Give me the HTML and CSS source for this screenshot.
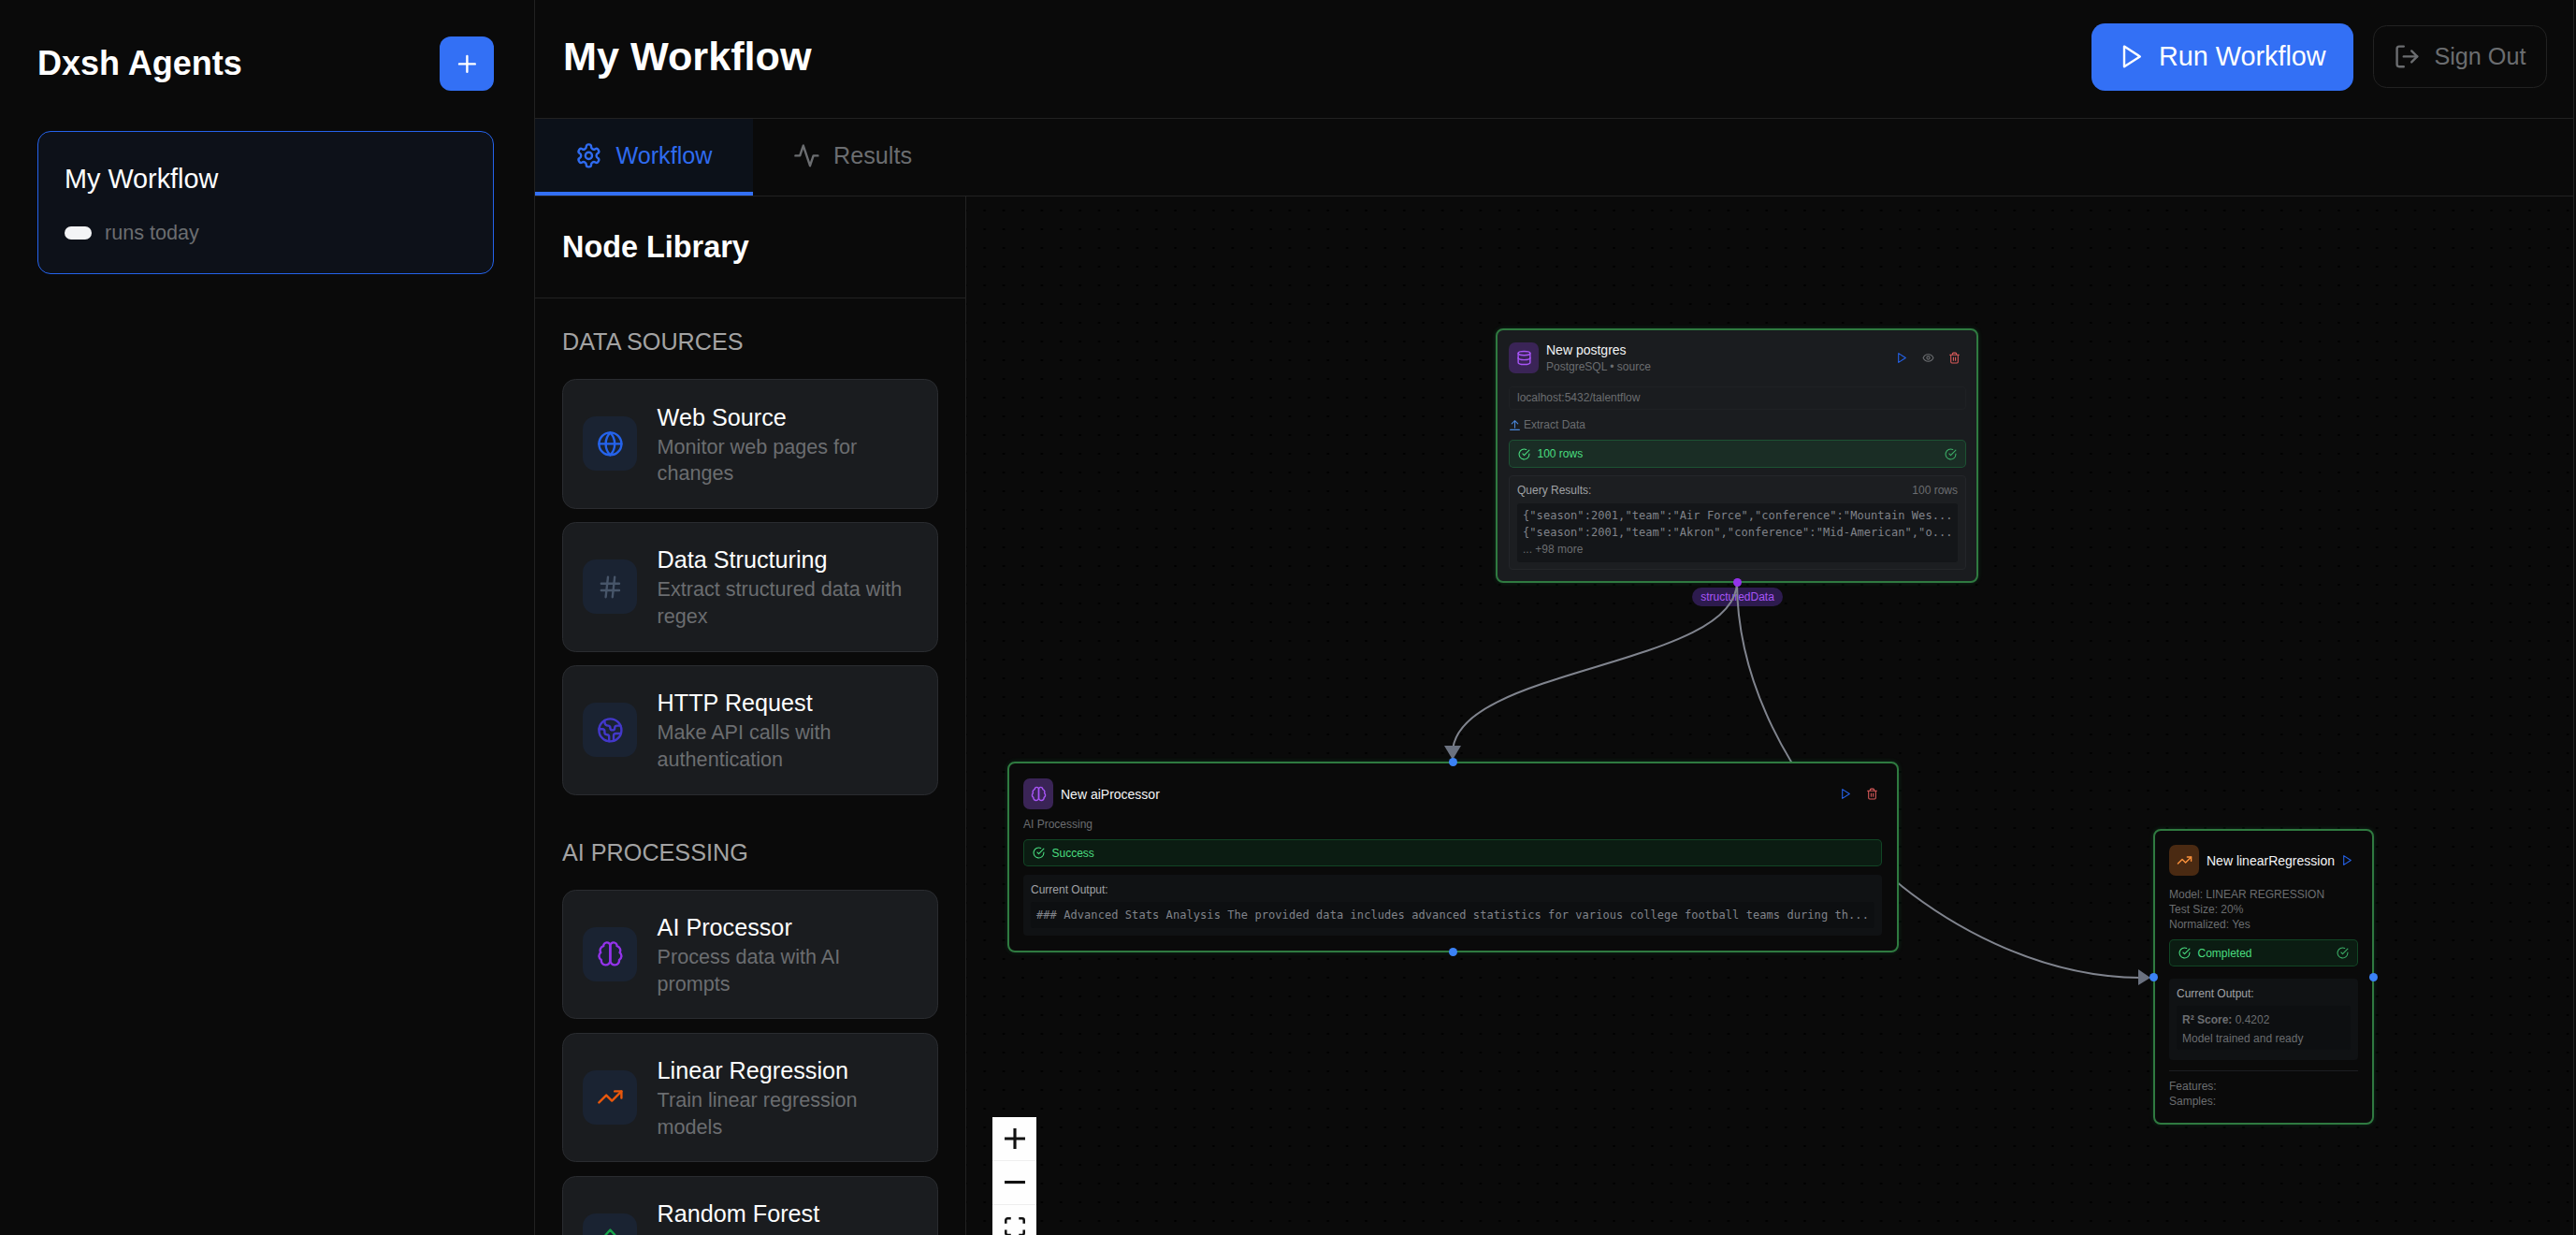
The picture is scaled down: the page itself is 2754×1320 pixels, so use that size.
FILE: index.html
```html
<!DOCTYPE html>
<html lang="en">

<head>
    <meta charset="UTF-8">
    <meta name="viewport" content="width=device-width, initial-scale=1.0">
    <title>My Workflow - Dxsh Agents</title>
    <link rel="stylesheet" href="styles.css">
</head>

<body>
    <!-- Icon set -->
    <svg class="icon-defs" aria-hidden="true">
        <symbol id="i-plus" viewBox="0 0 24 24"><path d="M5 12h14M12 5v14" /></symbol>
        <symbol id="i-play" viewBox="0 0 24 24"><polygon points="5 3 19 12 5 21" /></symbol>
        <symbol id="i-logout" viewBox="0 0 24 24"><path d="M9 21H5a2 2 0 0 1-2-2V5a2 2 0 0 1 2-2h4" /><polyline points="16 17 21 12 16 7" /><line x1="21" y1="12" x2="9" y2="12" /></symbol>
        <symbol id="i-gear" viewBox="0 0 24 24"><path d="M12.22 2h-.44a2 2 0 0 0-2 2v.18a2 2 0 0 1-1 1.73l-.43.25a2 2 0 0 1-2 0l-.15-.08a2 2 0 0 0-2.73.73l-.22.38a2 2 0 0 0 .73 2.73l.15.1a2 2 0 0 1 1 1.72v.51a2 2 0 0 1-1 1.74l-.15.09a2 2 0 0 0-.73 2.73l.22.38a2 2 0 0 0 2.73.73l.15-.08a2 2 0 0 1 2 0l.43.25a2 2 0 0 1 1 1.73V20a2 2 0 0 0 2 2h.44a2 2 0 0 0 2-2v-.18a2 2 0 0 1 1-1.73l.43-.25a2 2 0 0 1 2 0l.15.08a2 2 0 0 0 2.73-.73l.22-.39a2 2 0 0 0-.73-2.73l-.15-.08a2 2 0 0 1-1-1.74v-.5a2 2 0 0 1 1-1.74l.15-.09a2 2 0 0 0 .73-2.73l-.22-.38a2 2 0 0 0-2.73-.73l-.15.08a2 2 0 0 1-2 0l-.43-.25a2 2 0 0 1-1-1.73V4a2 2 0 0 0-2-2z" /><circle cx="12" cy="12" r="3" /></symbol>
        <symbol id="i-activity" viewBox="0 0 24 24"><path d="M22 12h-4l-3 9L9 3l-3 9H2" /></symbol>
        <symbol id="i-globe" viewBox="0 0 24 24"><circle cx="12" cy="12" r="10" /><path d="M12 2a14.5 14.5 0 0 0 0 20 14.5 14.5 0 0 0 0-20M2 12h20" /></symbol>
        <symbol id="i-hash" viewBox="0 0 24 24"><path d="M4 9h16M4 15h16M10 3 8 21M16 3l-2 18" /></symbol>
        <symbol id="i-earth" viewBox="0 0 24 24"><path d="M21.54 15H17a2 2 0 0 0-2 2v4.54" /><path d="M7 3.34V5a3 3 0 0 0 3 3a2 2 0 0 1 2 2c0 1.1.9 2 2 2a2 2 0 0 0 2-2c0-1.1.9-2 2-2h3.17" /><path d="M11 21.95V18a2 2 0 0 0-2-2a2 2 0 0 1-2-2v-1a2 2 0 0 0-2-2H2.05" /><circle cx="12" cy="12" r="10" /></symbol>
        <symbol id="i-brain" viewBox="0 0 24 24"><path d="M12 5a3 3 0 1 0-5.997.125 4 4 0 0 0-2.526 5.77 4 4 0 0 0 .556 6.588A4 4 0 1 0 12 18Z" /><path d="M12 5a3 3 0 1 1 5.997.125 4 4 0 0 1 2.526 5.77 4 4 0 0 1-.556 6.588A4 4 0 1 1 12 18Z" /></symbol>
        <symbol id="i-trend" viewBox="0 0 24 24"><polyline points="22 7 13.5 15.5 8.5 10.5 2 17" /><polyline points="16 7 22 7 22 13" /></symbol>
        <symbol id="i-tree" viewBox="0 0 24 24"><path d="m17 14 3 3.3a1 1 0 0 1-.7 1.7H4.7a1 1 0 0 1-.7-1.7L7 14h-.3a1 1 0 0 1-.7-1.7L9 9h-.2A1 1 0 0 1 8 7.3L12 3l4 4.3a1 1 0 0 1-.8 1.7H15l3 3.3a1 1 0 0 1-.7 1.7H17Z" /><path d="M12 22v-3" /></symbol>
        <symbol id="i-database" viewBox="0 0 24 24"><ellipse cx="12" cy="5" rx="9" ry="3" /><path d="M3 5V19A9 3 0 0 0 21 19V5" /><path d="M3 12A9 3 0 0 0 21 12" /></symbol>
        <symbol id="i-eye" viewBox="0 0 24 24"><path d="M2 12s3-7 10-7 10 7 10 7-3 7-10 7-10-7-10-7Z" /><circle cx="12" cy="12" r="3" /></symbol>
        <symbol id="i-trash" viewBox="0 0 24 24"><path d="M3 6h18M19 6v14c0 1-1 2-2 2H7c-1 0-2-1-2-2V6M8 6V4c0-1 1-2 2-2h4c1 0 2 1 2 2v2M10 11v6M14 11v6" /></symbol>
        <symbol id="i-check" viewBox="0 0 24 24"><path d="M22 11.08V12a10 10 0 1 1-5.93-9.14" /><polyline points="22 4 12 14.01 9 11.01" /></symbol>
        <symbol id="i-upload" viewBox="0 0 24 24"><path d="M12 17V3M6 9l6-6 6 6M3 21h18" /></symbol>
    </svg>

    <div class="app">
        <!-- Sidebar -->
        <aside class="sidebar">
            <div class="sidebar-head">
                <h2 class="brand">Dxsh Agents</h2>
                <button type="button" class="btn-add"><svg class="icon icon-add"><use href="#i-plus" /></svg></button>
            </div>
            <div class="agent-card">
                <div class="agent-name">My Workflow</div>
                <div class="agent-runs"><span class="agent-pill"></span>runs today</div>
            </div>
        </aside>

        <main class="main">
            <!-- Header -->
            <header class="topbar">
                <h1 class="page-title">My Workflow</h1>
                <div class="topbar-actions">
                    <button type="button" class="btn-run"><svg class="icon"><use href="#i-play" /></svg>Run Workflow</button>
                    <button type="button" class="btn-signout"><svg class="icon"><use href="#i-logout" /></svg>Sign Out</button>
                </div>
            </header>

            <!-- Tabs -->
            <nav class="tabs">
                <a class="tab active"><svg class="icon"><use href="#i-gear" /></svg>Workflow</a>
                <a class="tab"><svg class="icon"><use href="#i-activity" /></svg>Results</a>
            </nav>

            <div class="workspace">
                <!-- Node Library -->
                <section class="library">
                    <h2 class="library-title">Node Library</h2>
                    <div class="library-body">
                        <h3 class="group-title">Data Sources</h3>
                        <div class="group">
                            <div class="lib-card">
                                <div class="lib-icon blue"><svg class="icon"><use href="#i-globe" /></svg></div>
                                <div>
                                    <div class="lib-name">Web Source</div>
                                    <div class="lib-desc">Monitor web pages for changes</div>
                                </div>
                            </div>
                            <div class="lib-card">
                                <div class="lib-icon slate"><svg class="icon"><use href="#i-hash" /></svg></div>
                                <div>
                                    <div class="lib-name">Data Structuring</div>
                                    <div class="lib-desc">Extract structured data with regex</div>
                                </div>
                            </div>
                            <div class="lib-card">
                                <div class="lib-icon indigo"><svg class="icon"><use href="#i-earth" /></svg></div>
                                <div>
                                    <div class="lib-name">HTTP Request</div>
                                    <div class="lib-desc">Make API calls with authentication</div>
                                </div>
                            </div>
                        </div>

                        <h3 class="group-title">AI Processing</h3>
                        <div class="group">
                            <div class="lib-card">
                                <div class="lib-icon purple"><svg class="icon"><use href="#i-brain" /></svg></div>
                                <div>
                                    <div class="lib-name">AI Processor</div>
                                    <div class="lib-desc">Process data with AI prompts</div>
                                </div>
                            </div>
                            <div class="lib-card">
                                <div class="lib-icon orange"><svg class="icon"><use href="#i-trend" /></svg></div>
                                <div>
                                    <div class="lib-name">Linear Regression</div>
                                    <div class="lib-desc">Train linear regression models</div>
                                </div>
                            </div>
                            <div class="lib-card">
                                <div class="lib-icon green"><svg class="icon"><use href="#i-tree" /></svg></div>
                                <div>
                                    <div class="lib-name">Random Forest</div>
                                    <div class="lib-desc">Train random forest ensemble models</div>
                                </div>
                            </div>
                        </div>
                    </div>
                </section>

                <!-- Canvas -->
                <section class="canvas">
                    <span class="edge-label">structuredData</span>

                    <svg class="edges">
                        <path d="M824 412C824 503 520 503 520 595" />
                        <path d="M824 412C824 623 1045 835 1257 835" />
                        <polygon points="511,587 529,587 520,602" />
                        <polygon points="1253,826 1266,835 1253,843" />
                    </svg>

                    <!-- postgres node -->
                    <div class="node node-lit node-postgres">
                        <div class="node-head">
                            <div class="node-icon tint-purple"><svg class="icon"><use href="#i-database" /></svg></div>
                            <div class="node-titles">
                                <div class="node-title">New postgres</div>
                                <div class="node-sub">PostgreSQL • source</div>
                            </div>
                            <div class="node-actions">
                                <span class="act act-play"><svg class="icon"><use href="#i-play" /></svg></span>
                                <span class="act act-eye"><svg class="icon"><use href="#i-eye" /></svg></span>
                                <span class="act act-trash"><svg class="icon"><use href="#i-trash" /></svg></span>
                            </div>
                        </div>
                        <div class="node-url">localhost:5432/talentflow</div>
                        <div class="node-mode"><svg class="icon"><use href="#i-upload" /></svg>Extract Data</div>
                        <div class="status">
                            <svg class="icon"><use href="#i-check" /></svg><span>100 rows</span>
                            <svg class="icon status-end"><use href="#i-check" /></svg>
                        </div>
                        <div class="output output-query">
                            <div class="output-label"><span>Query Results:</span><span class="output-count">100 rows</span></div>
                            <div class="code code-rows">
                                <div class="mono">{"season":2001,"team":"Air Force","conference":"Mountain Wes...</div>
                                <div class="mono">{"season":2001,"team":"Akron","conference":"Mid-American","o...</div>
                                <div>... +98 more</div>
                            </div>
                        </div>
                        <span class="handle handle-purple handle-bottom"></span>
                    </div>

                    <!-- aiProcessor node -->
                    <div class="node node-ai">
                        <div class="node-head">
                            <div class="node-icon tint-purple"><svg class="icon"><use href="#i-brain" /></svg></div>
                            <div class="node-titles">
                                <div class="node-title">New aiProcessor</div>
                            </div>
                            <div class="node-actions">
                                <span class="act act-play"><svg class="icon"><use href="#i-play" /></svg></span>
                                <span class="act act-trash"><svg class="icon"><use href="#i-trash" /></svg></span>
                            </div>
                        </div>
                        <div class="node-kind">AI Processing</div>
                        <div class="status status-short">
                            <svg class="icon"><use href="#i-check" /></svg><span>Success</span>
                        </div>
                        <div class="output">
                            <div class="output-label">Current Output:</div>
                            <div class="code code-line"><div class="mono">### Advanced Stats Analysis The provided data includes advanced statistics for various college football teams during th...</div></div>
                        </div>
                        <span class="handle handle-top"></span>
                        <span class="handle handle-bottom"></span>
                    </div>

                    <!-- linearRegression node -->
                    <div class="node node-linear">
                        <div class="node-head">
                            <div class="node-icon tint-orange"><svg class="icon"><use href="#i-trend" /></svg></div>
                            <div class="node-titles">
                                <div class="node-title">New linearRegression</div>
                            </div>
                            <div class="node-actions">
                                <span class="act act-play"><svg class="icon"><use href="#i-play" /></svg></span>
                            </div>
                        </div>
                        <div class="node-meta">
                            <div>Model: LINEAR REGRESSION</div>
                            <div>Test Size: 20%</div>
                            <div>Normalized: Yes</div>
                        </div>
                        <div class="status status-short">
                            <svg class="icon"><use href="#i-check" /></svg><span>Completed</span>
                            <svg class="icon status-end"><use href="#i-check" /></svg>
                        </div>
                        <div class="output output-score">
                            <div class="output-label">Current Output:</div>
                            <div class="code code-score">
                                <div><strong>R² Score:</strong> 0.4202</div>
                                <div>Model trained and ready</div>
                            </div>
                        </div>
                        <div class="node-meta node-foot">
                            <div>Features:</div>
                            <div>Samples:</div>
                        </div>
                        <span class="handle handle-left"></span>
                        <span class="handle handle-right"></span>
                    </div>

                    <!-- Zoom controls -->
                    <div class="controls">
                        <button type="button" class="control"><svg viewBox="0 0 32 32"><path d="M32 18.285h-13.714v13.715h-4.571v-13.715h-13.715v-4.571h13.715v-13.714h4.571v13.714h13.715v4.571z" /></svg></button>
                        <button type="button" class="control"><svg viewBox="0 0 32 5"><path d="M0 0h32v4.571H0z" /></svg></button>
                        <button type="button" class="control"><svg viewBox="0 0 32 30"><path d="M3.692 4.63c0-.53.4-.938.939-.938h5.215V0H4.708C2.13 0 0 2.054 0 4.63v5.216h3.692V4.63zM27.354 0h-5.2v3.692h5.17c.53 0 .984.4.984.939v5.215H32V4.631A4.624 4.624 0 0027.354 0zm.954 24.83c0 .532-.4.94-.939.94h-5.215v3.768h5.215c2.577 0 4.631-2.13 4.631-4.707v-5.139h-3.692v5.139zm-23.677.94c-.531 0-.939-.4-.939-.94v-5.138H0v5.139c0 2.577 2.13 4.707 4.708 4.707h5.138V25.77H4.631z" /></svg></button>
                    </div>
                </section>
            </div>
        </main>
    </div>
</body>

</html>
```

FILE: styles.css
```css
/* Global Styles */
* {
    margin: 0;
    padding: 0;
    box-sizing: border-box;
    font-family: 'Liberation Sans', Arial, sans-serif;
}

html,
body {
    height: 100%;
    overflow: hidden;
    background-color: #0a0a0a;
    color: #fff;
}

button {
    border: none;
    background: none;
    color: inherit;
}

.icon-defs {
    display: none;
}

.icon {
    width: 28.8px;
    height: 28.8px;
    flex-shrink: 0;
    fill: none;
    stroke: currentColor;
    stroke-width: 2;
    stroke-linecap: round;
    stroke-linejoin: round;
}

.app {
    display: flex;
    width: 2752px;
    height: 1320px;
}

/* Sidebar */
.sidebar {
    width: 572px;
    flex-shrink: 0;
    padding: 39px 43px 0 40px;
    border-right: 1px solid #222;
}

.sidebar-head {
    display: flex;
    justify-content: space-between;
    align-items: center;
    margin-bottom: 43px;
}

.brand {
    font-size: 36px;
    font-weight: bold;
}

.btn-add {
    display: flex;
    align-items: center;
    justify-content: center;
    width: 58px;
    height: 58px;
    background-color: #3370f5;
    border-radius: 12px;
}

.agent-card {
    height: 153px;
    padding: 29px 28px;
    background-color: #0d1119;
    border: 1.8px solid #2563eb;
    border-radius: 14px;
}

.agent-name {
    font-size: 28.8px;
    line-height: 43px;
    margin-bottom: 21px;
}

.agent-runs {
    display: flex;
    align-items: center;
    gap: 14px;
    font-size: 21.6px;
    line-height: 29px;
    color: #6b6d70;
}

.agent-pill {
    width: 29px;
    height: 14px;
    background-color: #f3f4f6;
    border-radius: 7px;
}

/* Main */
.main {
    flex: 1;
    display: flex;
    flex-direction: column;
    min-width: 0;
    border-right: 1px solid #222;
}

.topbar {
    display: flex;
    justify-content: space-between;
    align-items: center;
    height: 127px;
    padding: 0 28px 5px 30px;
    border-bottom: 1px solid #222;
}

.page-title {
    font-size: 43.2px;
    font-weight: bold;
}

.topbar-actions {
    display: flex;
    align-items: center;
    gap: 21px;
}

.btn-run {
    display: flex;
    align-items: center;
    gap: 14.4px;
    height: 72px;
    padding: 0 29px;
    font-size: 28.8px;
    background-color: #3370f5;
    border-radius: 14.4px;
}

.btn-signout {
    display: flex;
    align-items: center;
    gap: 14.4px;
    height: 67px;
    padding: 0 21.6px;
    font-size: 25.2px;
    color: #6b6d70;
    border: 1.5px solid #222;
    border-radius: 14.4px;
}

/* Tabs */
.tabs {
    display: flex;
    height: 83px;
    border-bottom: 1px solid #222;
}

.tab {
    display: flex;
    align-items: center;
    gap: 14.4px;
    padding: 0 43.2px 3px;
    font-size: 25.2px;
    color: #6b6d70;
}

.tab.active {
    color: #2f6bf0;
    background-color: #0c1119;
    box-shadow: inset 0 -4px 0 #3370f5;
}

.workspace {
    flex: 1;
    display: flex;
    min-height: 0;
}

/* Node Library */
.library {
    width: 461px;
    flex-shrink: 0;
    overflow: hidden;
    border-right: 1px solid #222;
}

.library-title {
    height: 109px;
    padding: 0 29px;
    font-size: 32.4px;
    font-weight: bold;
    line-height: 108px;
    border-bottom: 1px solid #222;
}

.library-body {
    padding: 28px 29px 0;
}

.group-title {
    font-size: 25.2px;
    font-weight: normal;
    line-height: 36px;
    color: #a3a3a3;
    text-transform: uppercase;
    margin-bottom: 22px;
}

.group {
    display: flex;
    flex-direction: column;
    gap: 14.4px;
    margin-bottom: 43px;
}

.lib-card {
    display: flex;
    align-items: center;
    gap: 21.6px;
    height: 138.6px;
    padding: 0 21px;
    flex-shrink: 0;
    background-color: #1a1c1f;
    border: 1.5px solid #2a2c30;
    border-radius: 14.4px;
}

.lib-icon {
    display: flex;
    align-items: center;
    justify-content: center;
    width: 58px;
    height: 58px;
    flex-shrink: 0;
    background-color: #1a2332;
    border-radius: 14px;
}

.blue { color: #2563eb; }
.slate { color: #475569; }
.indigo { color: #4338ca; }
.purple { color: #9333ea; }
.orange { color: #ea580c; }
.green { color: #16a34a; }

.lib-name {
    font-size: 25.2px;
    line-height: 36px;
}

.lib-desc {
    font-size: 21.6px;
    line-height: 28.8px;
    color: #6b6d70;
}

/* Canvas */
.canvas {
    position: relative;
    flex: 1;
    overflow: hidden;
    background-image: radial-gradient(circle, #000 1px, transparent 1.3px);
    background-size: 20.4px 20px;
    background-position: 9.5px 5px;
}

.edge-label {
    position: absolute;
    left: 776px;
    top: 418px;
    width: 97px;
    height: 20px;
    font-size: 12px;
    line-height: 20px;
    text-align: center;
    color: #a855f7;
    background-color: #2d1b4e;
    border-radius: 10px;
}

.edges {
    position: absolute;
    left: 0;
    top: 0;
    width: 100%;
    height: 100%;
}

.edges path {
    fill: none;
    stroke: #80848e;
    stroke-width: 2;
}

.edges polygon {
    fill: #6b7280;
}

.node {
    position: absolute;
    display: flex;
    flex-direction: column;
    padding: 15px;
    font-size: 12px;
    line-height: 16px;
    background-color: #0a0a0a;
    border: 2.4px solid #2f7a40;
    border-radius: 8px;
    box-shadow: 0 0 5px rgba(34, 197, 94, 0.2);
}

.node-lit {
    background-color: #1a1c1f;
}

.node-postgres {
    left: 566px;
    top: 141px;
    width: 516px;
    height: 272px;
    padding: 13px 11px 0 12px;
}

.node-ai {
    left: 44px;
    top: 604px;
    width: 953px;
    height: 204px;
    padding: 16px 16px 0 15px;
}

.node-linear {
    left: 1269px;
    top: 676px;
    width: 236px;
    height: 316px;
    padding: 15px 15px 0 15px;
}

.node-head {
    display: flex;
    align-items: center;
    gap: 8px;
}

.node-icon {
    display: flex;
    align-items: center;
    justify-content: center;
    width: 32px;
    height: 33px;
    flex-shrink: 0;
    border-radius: 7px;
}

.node-icon .icon {
    width: 17px;
    height: 17px;
}

.tint-purple {
    color: #a855f7;
    background-color: #3a2456;
}

.tint-orange {
    color: #fb923c;
    background-color: #4a2a12;
}

.node-titles {
    flex: 1;
    min-width: 0;
}

.node-title {
    font-size: 14px;
    line-height: 16px;
    color: #f3f4f6;
    white-space: nowrap;
}

.node-sub {
    margin-top: 4px;
    line-height: 13px;
    color: #6b6d70;
}

.node-actions {
    display: flex;
    gap: 2px;
}

.node-ai .node-actions {
    margin-right: -2px;
}

.node-linear .node-actions {
    margin-right: -1px;
}

.act {
    display: flex;
    padding: 6.5px;
}

.act .icon {
    width: 13px;
    height: 13px;
}

.act-play { color: #2563eb; }
.act-eye { color: #6b6d70; }
.act-trash { color: #dc5b5b; }

.node-url {
    margin-top: 14px;
    height: 25px;
    padding: 0 8px;
    line-height: 23px;
    color: #6b6d70;
    border: 1px solid #1f2124;
    border-radius: 4px;
}

.node-mode {
    display: flex;
    align-items: center;
    gap: 3px;
    margin-top: 8px;
    color: #6b6d70;
}

.node-mode .icon {
    width: 13px;
    height: 13px;
    color: #4a86d8;
}

.node-kind {
    margin-top: 8px;
    color: #6b6d70;
}

.status {
    display: flex;
    align-items: center;
    gap: 7.5px;
    height: 30px;
    margin-top: 8px;
    padding: 0 9px;
    color: #4ade80;
    background-color: rgba(34, 197, 94, 0.1);
    border: 1px solid rgba(34, 197, 94, 0.25);
    border-radius: 5px;
}

.status-short {
    height: 29px;
}

.status .icon {
    width: 13px;
    height: 13px;
}

.status .status-end {
    margin-left: auto;
    color: #3cae67;
}

.output {
    margin-top: 9px;
    padding: 8px;
    background-color: #101214;
    border-radius: 4px;
}

.output-query {
    margin-top: 8px;
    height: 101px;
    padding-top: 7px;
    background-color: #1c1e21;
    border: 1px solid #24262a;
}

.output-score {
    margin-top: 13px;
    height: 87px;
}

.output-label {
    display: flex;
    justify-content: space-between;
    color: #a0a2a6;
}

.output-count {
    color: #6b6d70;
}

.code {
    margin-top: 5px;
    padding: 0 6px;
    color: #6b6d70;
    background-color: #0d0f11;
    border-radius: 3px;
}

.code-rows {
    height: 63px;
    margin-top: 6px;
    padding-top: 4px;
    line-height: 18px;
    background-color: #141619;
}

.code-line {
    height: 28px;
    line-height: 28px;
}

.code-score {
    height: 47px;
    padding-top: 5px;
    line-height: 20px;
}

.mono {
    font-family: 'DejaVu Sans Mono', monospace;
    letter-spacing: 0.07px;
    white-space: nowrap;
    color: #80838a;
}

.node-meta {
    margin-top: 12px;
    color: #6b6d70;
}

.node-foot {
    margin-top: 11px;
    padding-top: 8px;
    border-top: 1px solid #1c1e21;
}

/* Handles */
.handle {
    position: absolute;
    width: 9px;
    height: 9px;
    background-color: #3b82f6;
    border-radius: 50%;
}

.handle-purple {
    background-color: #9333ea;
}

.handle-top {
    top: -6px;
    left: 50%;
    margin-left: -4.5px;
}

.handle-bottom {
    bottom: -6px;
    left: 50%;
    margin-left: -4.5px;
}

.handle-left {
    left: -6px;
    top: 50%;
    margin-top: -4.5px;
}

.handle-right {
    right: -6px;
    top: 50%;
    margin-top: -4.5px;
}

/* Zoom controls */
.controls {
    position: absolute;
    left: 28px;
    top: 984px;
    width: 47px;
    background-color: #fefefe;
}

.control {
    display: flex;
    align-items: center;
    justify-content: center;
    width: 47px;
    height: 47px;
    border-bottom: 1px solid #eee;
}

.control svg {
    width: 22px;
    max-height: 22px;
    fill: #111;
}
```
